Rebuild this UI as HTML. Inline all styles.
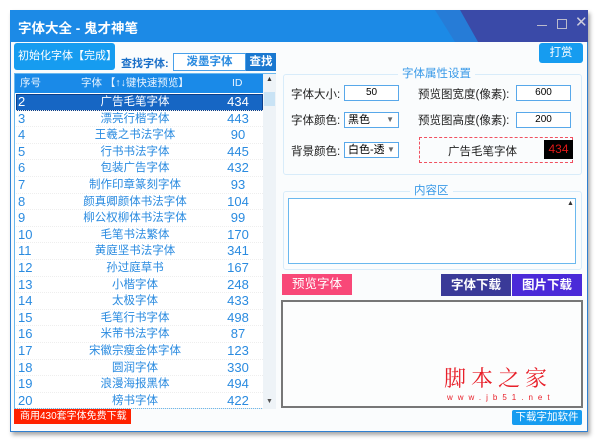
<!DOCTYPE html>
<html><head><meta charset="utf-8"><style>
*{margin:0;padding:0;box-sizing:border-box}
body{width:600px;height:441px;background:#fff;position:relative;overflow:hidden;font-family:"Liberation Sans","Noto Sans CJK SC",sans-serif;font-size:12px}
.a{position:absolute;white-space:nowrap}
.win{left:10px;top:10px;width:578px;height:422px;background:#fafcfd;border:1px solid #2f7fd0;box-shadow:2px 3px 4px rgba(0,0,0,.35)}
.tb{left:10px;top:10px;width:578px;height:32px;background:#1c8ae6;overflow:hidden}
.row{position:absolute;left:16px;width:247px;height:16.6px;color:#2a8be0;font-size:11.5px;line-height:16px;border-bottom:1px dotted #eee}
.row span{position:absolute;top:0}
.lbl{color:#222;font-size:11.5px}
.in{background:#fff;border:1px solid #58a8ea;font-size:10px;text-align:center;line-height:14px;height:16px}
.grp{border:1px solid #d8ecfa;border-radius:3px}
.gt{background:#fafcfd;color:#3a9ae8;font-size:11.5px;padding:0 4px;line-height:14px}
</style></head><body>
<div class="a win"></div>
<div class="a tb"><svg width="578" height="32" class="a" style="left:0;top:0"><polygon points="450,0 578,0 578,32 468,32" fill="#3a4aa8"/><polygon points="425,0 450,0 468,32 445,32" fill="#2f6dc8" opacity=".5"/></svg>
<div class="a" style="left:8px;top:7px;color:#fff;font-size:13.5px;font-weight:bold">字体大全 - 鬼才神笔</div>
<div class="a" style="left:527px;top:15px;width:10px;height:1px;background:#bbc"></div>
<div class="a" style="left:547px;top:9px;width:10px;height:10px;border:1px solid #bbc"></div>
<div class="a" style="left:565px;top:3px;color:#ccd;font-size:15px">✕</div>
</div>
<div class="a" style="left:14px;top:43px;width:101px;height:27px;background:#169cf0;border-radius:3px;color:#fff;font-size:11px;line-height:27px;padding-left:4px">初始化字体【完成】</div>
<div class="a" style="left:121px;top:55px;color:#1a6fc8;font-weight:bold;font-size:11px">查找字体:</div>
<div class="a" style="left:173px;top:53px;width:73px;height:18px;background:#fff;border:1px solid #48a0ea;color:#2a8be0;font-weight:bold;text-align:center;line-height:16px;font-size:11.5px">泼墨字体</div>
<div class="a" style="left:246px;top:53px;width:30px;height:18px;background:#1a78d0;color:#fff;font-weight:bold;text-align:center;line-height:18px;font-size:11.5px">查找</div>
<div class="a" style="left:14px;top:73px;width:262px;height:336px;border:1px solid #6ab8ee;background:#fff"></div>
<div class="a" style="left:15px;top:74px;width:248px;height:19px;background:#1a8ae8;color:#e8f4ff;font-size:10.5px;line-height:19px">
<span class="a" style="left:5px">序号</span><span class="a" style="left:66px">字体 【↑↓键快速预览】</span><span class="a" style="left:217px">ID</span></div>
<div class="a" style="left:263px;top:74px;width:13px;height:335px;background:#eef3f7"></div>
<div class="a" style="left:264px;top:92px;width:11px;height:14px;background:#c9e3f5"></div>
<div class="a" style="left:266px;top:76px;font-size:7px;color:#333">▲</div>
<div class="a" style="left:266px;top:398px;font-size:7px;color:#555">▼</div>
<div class="a" style="left:16px;top:94px;width:247px;height:17px;background:#1666c4;border:1px solid #0c3f8a"></div>
<div id="rows"></div>
<div class="a" style="left:14px;top:409px;width:117px;height:15px;background:#f20;color:#fff;font-size:10px;line-height:15px;padding-left:6px">商用430套字体免费下载</div>
<!-- right -->
<div class="a" style="left:539px;top:43px;width:44px;height:20px;background:#169cf0;border-radius:3px;color:#fff;text-align:center;line-height:20px;font-size:11.5px">打赏</div>
<div class="a grp" style="left:283px;top:74px;width:299px;height:101px"></div>
<div class="a gt" style="left:398px;top:67px">字体属性设置</div>
<div class="a lbl" style="left:291px;top:86px">字体大小:</div><div class="a in" style="left:344px;top:85px;width:55px">50</div>
<div class="a lbl" style="left:418px;top:86px">预览图宽度(像素):</div><div class="a in" style="left:516px;top:85px;width:55px">600</div>
<div class="a lbl" style="left:291px;top:112px">字体颜色:</div><div class="a in" style="left:344px;top:112px;width:55px;text-align:left;padding-left:3px;font-size:11px">黑色<span style="position:absolute;right:4px;font-size:8px;color:#666">▼</span></div>
<div class="a lbl" style="left:418px;top:112px">预览图高度(像素):</div><div class="a in" style="left:516px;top:112px;width:55px">200</div>
<div class="a lbl" style="left:291px;top:143px">背景颜色:</div><div class="a in" style="left:344px;top:142px;width:55px;text-align:left;padding-left:3px;overflow:hidden;font-size:11px">白色-透明<span style="position:absolute;right:0;top:0;width:14px;height:14px;background:#fff;font-size:8px;color:#666;text-align:center">▼</span></div>
<div class="a" style="left:419px;top:137px;width:154px;height:26px;border:1px dashed #f05060"></div>
<div class="a" style="left:448px;top:143px;color:#222;font-size:11.5px">广告毛笔字体</div>
<div class="a" style="left:544px;top:140px;width:29px;height:19px;background:#000;color:#e01818;font-size:12px;line-height:19px;text-align:center">434</div>
<div class="a grp" style="left:283px;top:191px;width:299px;height:79px"></div>
<div class="a gt" style="left:410px;top:184px">内容区</div>
<div class="a" style="left:288px;top:198px;width:288px;height:66px;border:1px solid #6ab8ee;background:#fff"></div>
<div class="a" style="left:567px;top:200px;font-size:7px;color:#333">▲</div>
<div class="a" style="left:282px;top:274px;width:70px;height:21px;background:#f84878;color:#fff;font-size:12.5px;text-align:center;line-height:21px">预览字体</div>
<div class="a" style="left:441px;top:274px;width:70px;height:22px;background:#3a3a98;color:#fff;font-size:12.5px;font-weight:bold;text-align:center;line-height:22px">字体下载</div>
<div class="a" style="left:512px;top:274px;width:70px;height:22px;background:#4a2ad8;color:#fff;font-size:12.5px;font-weight:bold;text-align:center;line-height:22px">图片下载</div>
<div class="a" style="left:281px;top:300px;width:302px;height:108px;border:2px solid #777;background:#fcfdfd"></div>
<div class="a" style="left:444px;top:362px;color:#e8202a;font-size:22px;letter-spacing:5px;font-family:'Noto Serif CJK SC',serif">脚本之家</div>
<div class="a" style="left:447px;top:393px;color:#e8202a;font-size:8px;letter-spacing:5px">www.jb51.net</div>
<div class="a" style="left:512px;top:410px;width:70px;height:15px;background:#169cf0;border-radius:2px;color:#fff;font-size:10.5px;line-height:15px;text-align:center">下载字加软件</div>
<script>
var d=[[2,"广告毛笔字体",434],[3,"漂亮行楷字体",443],[4,"王羲之书法字体",90],[5,"行书书法字体",445],[6,"包装广告字体",432],[7,"制作印章篆刻字体",93],[8,"颜真卿颜体书法字体",104],[9,"柳公权柳体书法字体",99],[10,"毛笔书法繁体",170],[11,"黄庭坚书法字体",341],[12,"孙过庭草书",167],[13,"小楷字体",248],[14,"太极字体",433],[15,"毛笔行书字体",498],[16,"米芾书法字体",87],[17,"宋徽宗瘦金体字体",123],[18,"圆润字体",330],[19,"浪漫海报黑体",494],[20,"榜书字体",422]];
var h="";d.forEach(function(r,i){var t=94+i*16.6;var c=i==0?"color:#fff;":"";h+='<div class="row" style="top:'+t+'px;'+c+'"><span style="left:2px;font-size:13px">'+r[0]+'</span><span style="left:40px;width:158px;text-align:center">'+r[1]+'</span><span style="left:198px;width:48px;text-align:center;font-size:13px">'+r[2]+'</span></div>';});
document.getElementById("rows").outerHTML=h;
</script>
</body></html>
